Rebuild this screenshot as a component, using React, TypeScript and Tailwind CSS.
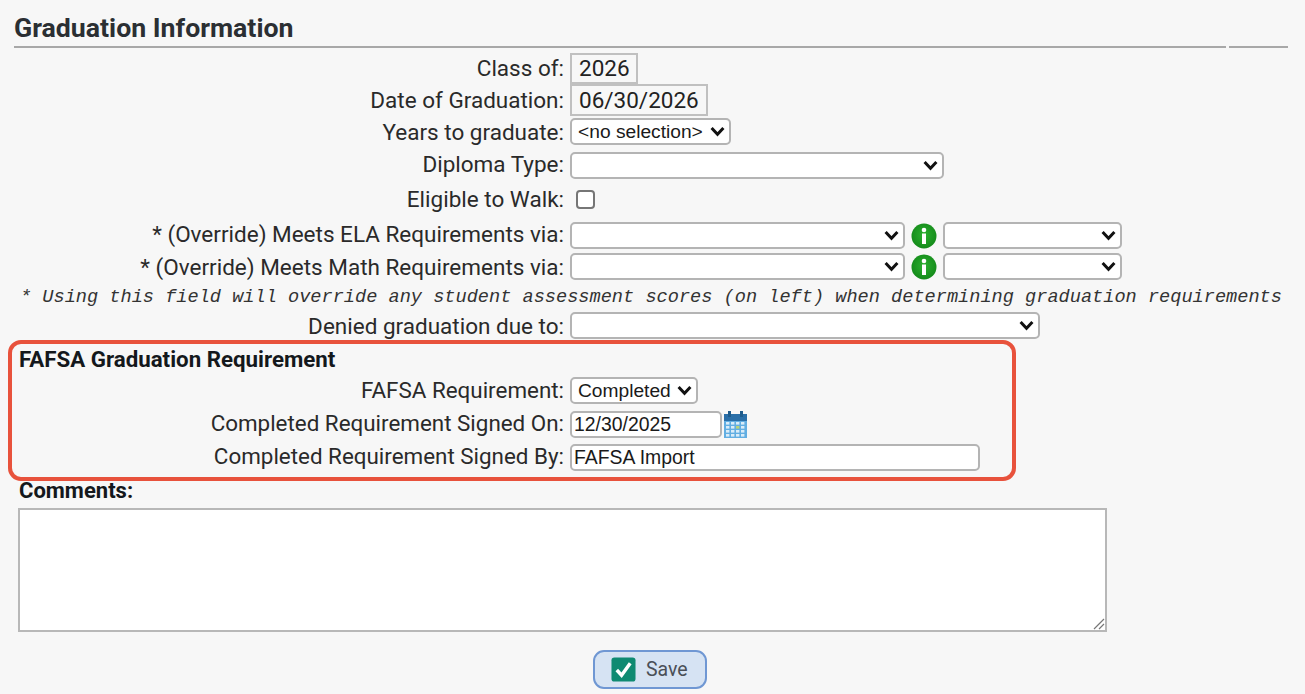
import React from "react";

const font = "font-['Roboto','Liberation_Sans',sans-serif]";
const ctl = "font-['Liberation_Sans',Arial,sans-serif]";

function Sel({ w, value = "" }: { w: string; value?: string }) {
  return (
    <div className={`relative h-[27px] ${w} shrink-0 rounded-[5px] border-2 border-[#b4b4b4] bg-white flex items-center`}>
      <span className={`${ctl} pl-[6px] text-[19.2px] leading-none text-[#1a1a1a] whitespace-nowrap`}>{value}</span>
      <svg className="absolute right-[4px] top-[6px]" width="15" height="11" viewBox="0 0 15 11" fill="none">
        <path d="M1.6 2 L7.5 8.2 L13.4 2" stroke="#111" strokeWidth="3" />
      </svg>
    </div>
  );
}

function Row({ label, h, mt = "", lb = "", children }: { label: string; h: string; mt?: string; lb?: string; children: React.ReactNode }) {
  return (
    <div className={`flex items-center ${h} ${mt}`}>
      <div className={`w-[564px] shrink-0 text-right whitespace-nowrap ${lb}`}>{label}</div>
      <div className="ml-[6px] flex items-center">{children}</div>
    </div>
  );
}

function Info() {
  return (
    <svg className="mx-[6px] shrink-0" width="26" height="26" viewBox="0 0 26 26">
      <defs>
        <radialGradient id="g" cx="50%" cy="45%" r="55%">
          <stop offset="0%" stopColor="#2bb02f" />
          <stop offset="100%" stopColor="#148a1a" />
        </radialGradient>
      </defs>
      <circle cx="13" cy="13" r="12.5" fill="url(#g)" />
      <circle cx="13" cy="7" r="2.3" fill="#fff" />
      <rect x="11" y="10.5" width="4" height="10.5" fill="#fff" />
    </svg>
  );
}

function Box({ h, w, children }: { h: string; w: string; children: React.ReactNode }) {
  return (
    <div className={`${h} ${w} border-2 border-[#c0c0c0] pl-[7px] flex items-center text-[22.5px] text-[#222] leading-none`}>{children}</div>
  );
}

function CalendarIcon() {
  return (
    <svg className="ml-[1px]" width="25" height="27" viewBox="0 0 25 27">
      <rect x="1" y="3" width="23" height="24" fill="#62aee2" />
      <rect x="1" y="3" width="23" height="7" fill="#2a6fa8" />
      <rect x="5" y="0" width="3" height="6" fill="#1f5c8c" />
      <rect x="17" y="0" width="3" height="6" fill="#1f5c8c" />
      {[12, 16, 20, 24].map((y) =>
        [3, 8, 13, 18].map((x) => (
          <rect key={`${x}-${y}`} x={x} y={y - 1} width="3.4" height="2.6" fill={y === 16 && x === 13 ? "#b9d37a" : "#d9ecf8"} />
        ))
      )}
    </svg>
  );
}

export default function App() {
  const input = `${ctl} h-[27px] rounded-[5px] border-2 border-[#b4b4b4] bg-white pl-[2px] flex items-center text-[19.4px] leading-none text-[#1a1a1a]`;
  return (
    <div className={`${font} w-[1305px] h-[694px] overflow-hidden bg-[#f7f7f7] text-[22.5px] leading-none text-[#2a2a2a]`}>
      <div className="ml-[14px] pt-[16px] h-[46px]">
        <span className="text-[26.7px] font-bold text-[#2b2f33] leading-[25px] block">Graduation Information</span>
      </div>
      <div className="flex">
        <div className="ml-[14px] w-[1212px] h-[2px] bg-[#a8a8a8]" />
        <div className="ml-[3px] w-[59px] h-[2px] bg-[#a8a8a8]" />
      </div>

      <Row label="Class of:" h="h-[31px]" mt="mt-[5px]"><Box h="h-[31px]" w="w-[68px]">2026</Box></Row>
      <Row label="Date of Graduation:" h="h-[32px]"><Box h="h-[32px]" w="w-[138px]">06/30/2026</Box></Row>
      <Row label="Years to graduate:" h="h-[27px]" mt="mt-[2px]" lb="pt-[2px]"><Sel w="w-[161px]" value="<no selection>" /></Row>
      <Row label="Diploma Type:" h="h-[27px]" mt="mt-[7px]" lb="pb-[2px]"><Sel w="w-[374px]" /></Row>
      <Row label="Eligible to Walk:" h="h-[20px]" mt="mt-[10px]">
        <div className="ml-[6px] h-[19px] w-[19px] rounded-[4px] border-2 border-[#767676] bg-white" />
      </Row>
      <Row label="* (Override) Meets ELA Requirements via:" h="h-[27px]" mt="mt-[13px]" lb="pb-[3px]">
        <Sel w="w-[335px]" /><Info /><Sel w="w-[179px]" />
      </Row>
      <Row label="* (Override) Meets Math Requirements via:" h="h-[27px]" mt="mt-[4px]" lb="pt-[1px]">
        <Sel w="w-[335px]" /><Info /><Sel w="w-[179px]" />
      </Row>
      <div className="mt-[9px] h-[17px] ml-[20px] font-['Liberation_Mono',monospace] italic text-[18.62px] leading-[17px] text-[#333] whitespace-nowrap">
        * Using this field will override any student assessment scores (on left) when determining graduation requirements
      </div>
      <Row label="Denied graduation due to:" h="h-[27px]" mt="mt-[6px]" lb="pt-[1px]"><Sel w="w-[470px]" /></Row>

      <div className="ml-[8px] mt-[1px] w-[1008px] h-[141px] rounded-[13px] border-[4px] border-[#e8523c]">
        <div className="ml-[7px] mt-[4px] h-[22px] text-[22.3px] font-bold leading-[22px] text-[#14181c]">FAFSA Graduation Requirement</div>
        <div className="-ml-[12px] mt-[7px] text-[22.4px]">
          <Row label="FAFSA Requirement:" h="h-[27px]"><Sel w="w-[128px]" value="Completed" /></Row>
          <Row label="Completed Requirement Signed On:" h="h-[27px]" mt="mt-[7px]" lb="pb-[2px]">
            <div className={`${input} w-[152px]`}>12/30/2025</div>
            <CalendarIcon />
          </Row>
          <Row label="Completed Requirement Signed By:" h="h-[27px]" mt="mt-[6px]" lb="pb-[2px]">
            <div className={`${input} w-[410px]`}>FAFSA Import</div>
          </Row>
        </div>
      </div>

      <div className="ml-[19px] h-[19px] text-[22px] font-bold leading-[19px] text-[#14181c]">Comments:</div>
      <div className="ml-[18px] mt-[8px] w-[1089px] h-[124px] border-2 border-[#b8b8b8] bg-white relative">
        <svg className="absolute right-0 bottom-0" width="12" height="12" viewBox="0 0 12 12" stroke="#777" strokeWidth="1.2">
          <path d="M1 11 L11 1 M6 11 L11 6" />
        </svg>
      </div>
      <div className="ml-[593px] mt-[18px] w-[114px] h-[39px] rounded-[11px] border-2 border-[#6f97d3] bg-[#d6e3f3] flex items-center pl-[16px] gap-[10px]">
        <svg width="25" height="25" viewBox="0 0 26 26">
          <rect x="0.5" y="0.5" width="25" height="25" rx="3" fill="#0f8a72" />
          <path d="M6 13.5 L11 19 L20 6.5" fill="none" stroke="#fff" strokeWidth="3.6" />
        </svg>
        <span className="text-[19.5px] text-[#4a4f57]">Save</span>
      </div>
    </div>
  );
}
